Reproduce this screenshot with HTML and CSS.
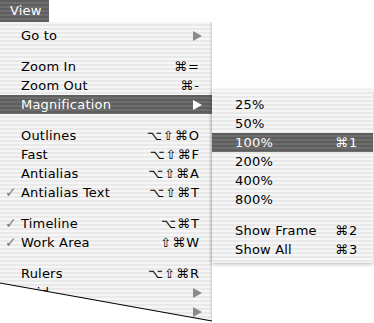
FILE: index.html
```html
<!DOCTYPE html>
<html>
<head>
<meta charset="utf-8">
<link rel="stylesheet" href="styles.css">
</head>
<body>
<div class="titlebar"><span class="title">View</span></div>
<div class="menu main">
  <div class="item"><span class="check"></span><span class="label">Go to</span><span class="arrow"></span></div>
  <div class="sep"></div>
  <div class="item"><span class="check"></span><span class="label">Zoom In</span><span class="key">⌘=</span></div>
  <div class="item"><span class="check"></span><span class="label">Zoom Out</span><span class="key">⌘-</span></div>
  <div class="item hi"><span class="check"></span><span class="label">Magnification</span><span class="arrow"></span></div>
  <div class="sep"></div>
  <div class="item"><span class="check"></span><span class="label">Outlines</span><span class="key">⌥⇧⌘O</span></div>
  <div class="item"><span class="check"></span><span class="label">Fast</span><span class="key">⌥⇧⌘F</span></div>
  <div class="item"><span class="check"></span><span class="label">Antialias</span><span class="key">⌥⇧⌘A</span></div>
  <div class="item"><span class="check">✓</span><span class="label">Antialias Text</span><span class="key">⌥⇧⌘T</span></div>
  <div class="sep"></div>
  <div class="item"><span class="check">✓</span><span class="label">Timeline</span><span class="key">⌥⌘T</span></div>
  <div class="item"><span class="check">✓</span><span class="label">Work Area</span><span class="key">⇧⌘W</span></div>
  <div class="sep"></div>
  <div class="item"><span class="check"></span><span class="label">Rulers</span><span class="key">⌥⇧⌘R</span></div>
  <div class="item"><span class="check"></span><span class="label">Grid</span><span class="arrow"></span></div>
  <div class="item"><span class="check"></span><span class="label">Guides</span><span class="arrow"></span></div>
</div>
<div class="menu sub">
  <div class="item"><span class="label">25%</span></div>
  <div class="item"><span class="label">50%</span></div>
  <div class="item hi"><span class="label">100%</span><span class="key">⌘1</span></div>
  <div class="item"><span class="label">200%</span></div>
  <div class="item"><span class="label">400%</span></div>
  <div class="item"><span class="label">800%</span></div>
  <div class="sep"></div>
  <div class="item"><span class="label">Show Frame</span><span class="key">⌘2</span></div>
  <div class="item"><span class="label">Show All</span><span class="key">⌘3</span></div>
</div>
<svg class="tear" width="374" height="323" viewBox="0 0 374 323"><line x1="0" y1="283" x2="212" y2="321" stroke="#000" stroke-width="1.1"/></svg>
</body>
</html>
```
FILE: styles.css
```css
html, body {
  margin: 0;
  padding: 0;
  background: #fff;
  width: 374px;
  height: 323px;
  overflow: hidden;
  position: relative;
  font-family: "DejaVu Sans", "Liberation Sans", sans-serif;
  font-size: 13px;
  color: #000;
}
.titlebar {
  width: 49px;
  height: 22px;
  background: repeating-linear-gradient(to bottom, #5e5e5e 0 2px, #6e6e6e 2px 4px);
  display: flex;
  align-items: center;
}
.title {
  color: #fff;
  padding-left: 10px;
  line-height: 22px;
  letter-spacing: 0.2px;
}
.menu {
  background: repeating-linear-gradient(to bottom, #f6f6f6 0 2px, #e9e9e9 2px 4px);
  box-sizing: border-box;
}
.main {
  width: 212px;
  height: 301px;
  padding-top: 4px;
  clip-path: polygon(0 0, 212px 0, 212px 299px, 0 261px);
  box-shadow: inset -3px 0 3px -2px rgba(0,0,0,0.15);
}
.item {
  height: 19px;
  line-height: 19px;
  display: flex;
  align-items: center;
  white-space: nowrap;
  letter-spacing: 0.2px;
}
.sep {
  height: 12px;
}
.hi {
  background: repeating-linear-gradient(to bottom, #5e5e5e 0 2px, #6e6e6e 2px 4px);
  color: #fff;
}
.check {
  width: 21px;
  flex: none;
  color: #7d7d7d;
  text-align: center;
  padding-left: 1px;
  box-sizing: border-box;
  font-size: 14px;
}
.main .label {
  flex: 1;
}
.main .key {
  margin-right: 12px;
  letter-spacing: 1px;
}
.arrow {
  width: 0;
  height: 0;
  border-left: 9px solid #8a8a8a;
  border-top: 5px solid transparent;
  border-bottom: 5px solid transparent;
  margin-right: 10px;
}
.hi .arrow {
  border-left-color: #fff;
}
.sub {
  position: absolute;
  left: 212px;
  top: 90px;
  width: 161px;
  padding: 5px 0 4px;
  box-shadow: 0 1px 4px rgba(0,0,0,0.3);
}
.sub .label {
  padding-left: 23px;
  width: 100px;
}
.sub .key {
  letter-spacing: 1px;
}
.tear {
  position: absolute;
  left: 0;
  top: 0;
  pointer-events: none;
}
```
